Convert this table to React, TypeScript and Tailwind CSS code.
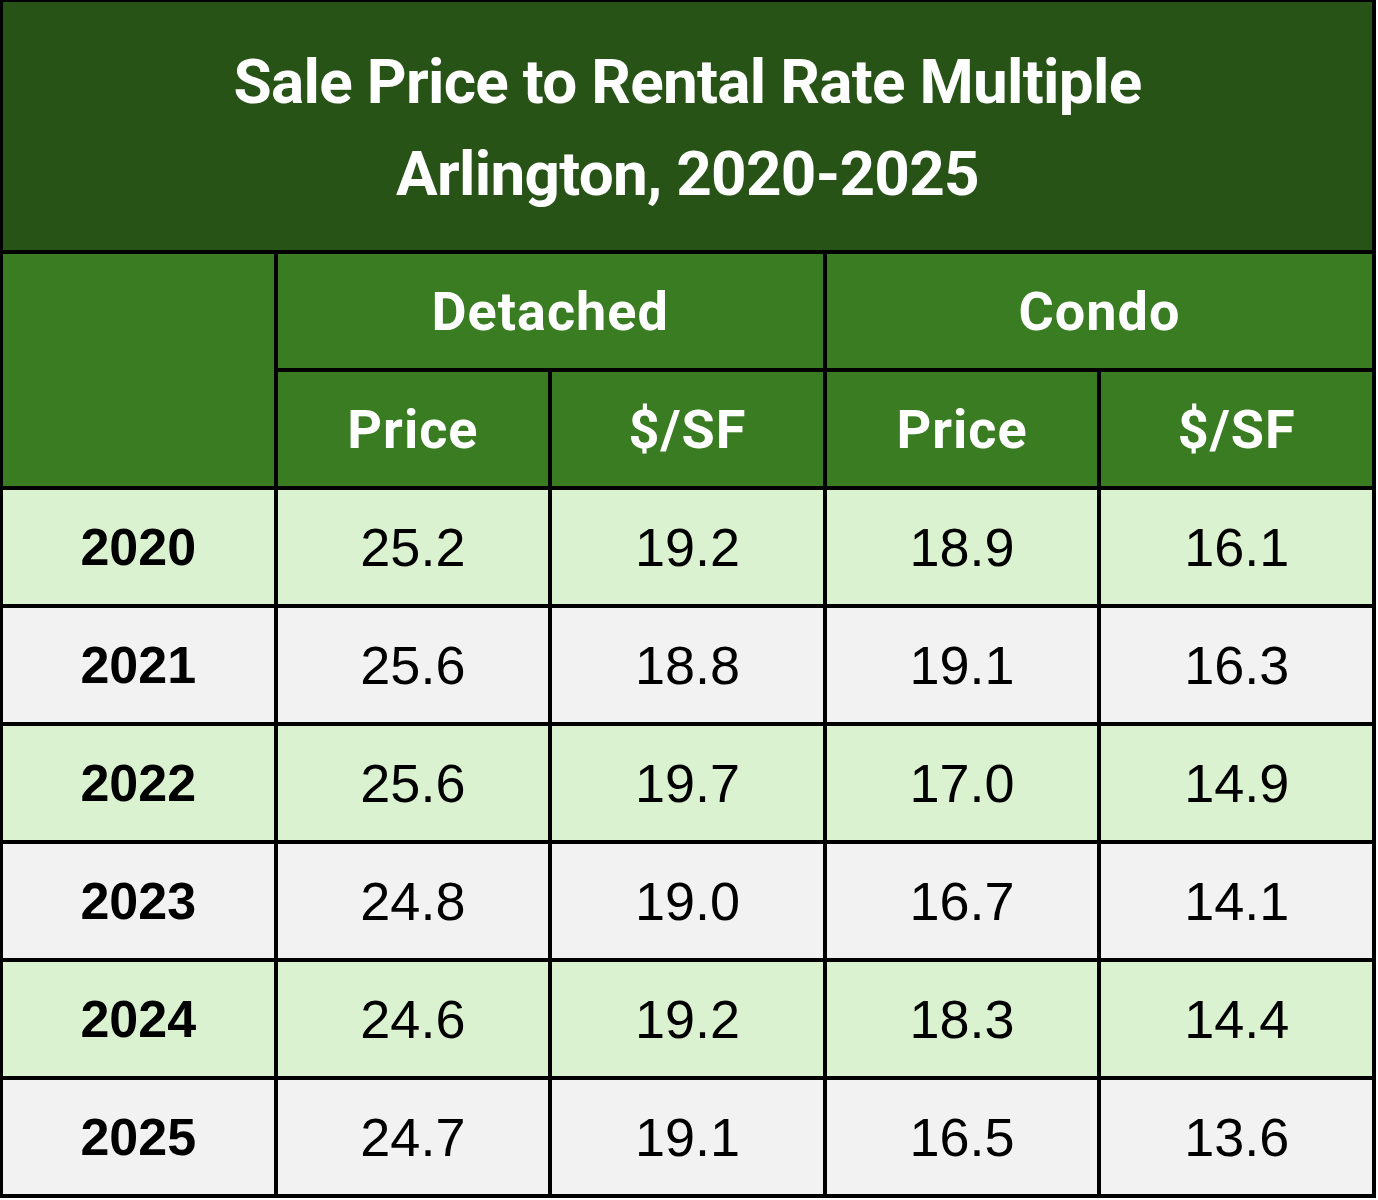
import React from "react";

const rows = [
  ["2020", "25.2", "19.2", "18.9", "16.1"],
  ["2021", "25.6", "18.8", "19.1", "16.3"],
  ["2022", "25.6", "19.7", "17.0", "14.9"],
  ["2023", "24.8", "19.0", "16.7", "14.1"],
  ["2024", "24.6", "19.2", "18.3", "14.4"],
  ["2025", "24.7", "19.1", "16.5", "13.6"],
];

const headCls =
  "bg-[#3a7c22] text-white flex items-center justify-center font-bold text-[54px] tracking-[1px] font-['Roboto','Liberation_Sans',sans-serif]";

export default function App() {
  return (
    <div className="w-[1378px] h-[1200px] bg-white">
      <div className="w-[1376px] h-[1198px] bg-black pt-[2px] pl-[3px] pr-[4px] pb-[4px]">
        <div className="grid h-full gap-[4px] grid-cols-5 grid-rows-[248px_repeat(8,minmax(0,1fr))]">
          <div className="col-span-5 bg-[#275317] text-white flex flex-col items-center justify-center font-bold text-[62px] leading-[92px] tracking-[-0.7px] pt-[4px] font-['Roboto','Liberation_Sans',sans-serif]">
            <div>Sale Price to Rental Rate Multiple</div>
            <div>Arlington, 2020-2025</div>
          </div>
          <div className="row-span-2 bg-[#3a7c22]" />
          <div className={headCls + " col-span-2"}>Detached</div>
          <div className={headCls + " col-span-2"}>Condo</div>
          <div className={headCls}>Price</div>
          <div className={headCls}>$/SF</div>
          <div className={headCls}>Price</div>
          <div className={headCls}>$/SF</div>
          {rows.map((r, ri) => {
            const bg = ri % 2 === 0 ? "bg-[#daf2d0]" : "bg-[#f2f2f2]";
            return r.map((c, ci) => (
              <div
                key={ri + "-" + ci}
                className={
                  bg +
                  " flex items-center justify-center text-black font-['Liberation_Sans',Arial,sans-serif] " +
                  (ci === 0 ? "font-bold text-[52px]" : "text-[54px]")
                }
              >
                {c}
              </div>
            ));
          })}
        </div>
      </div>
    </div>
  );
}
